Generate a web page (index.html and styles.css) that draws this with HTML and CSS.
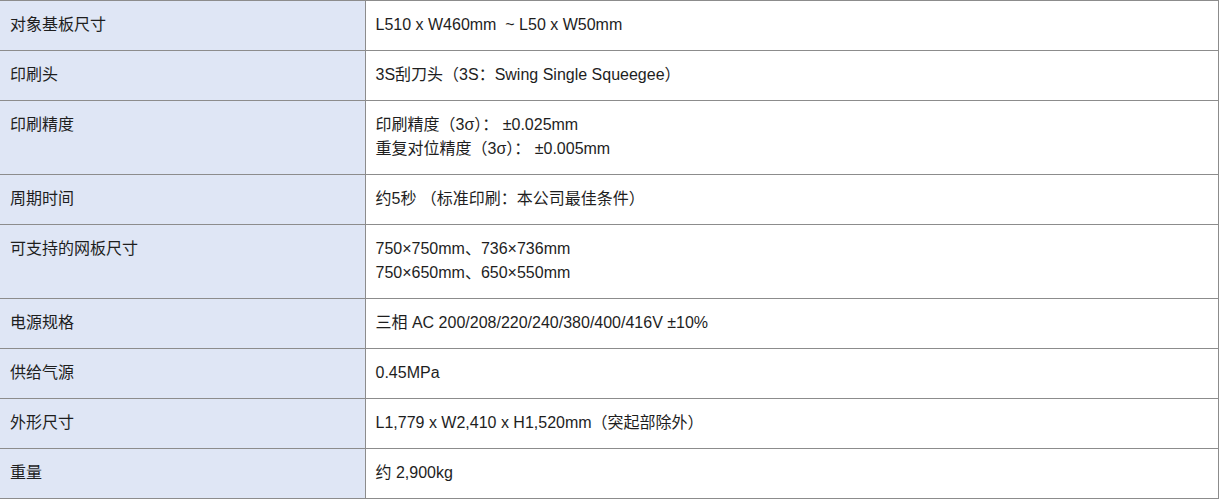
FILE: index.html
```html
<!DOCTYPE html>
<html lang="zh-CN">
<head>
<meta charset="utf-8">
<title>规格</title>
<link rel="stylesheet" href="styles.css">
</head>
<body>
<table class="spec">
  <colgroup><col class="c-label"><col class="c-value"></colgroup>
  <tbody>
    <tr><th>对象基板尺寸</th><td>L510 x W460mm &nbsp;~ L50 x W50mm</td></tr>
    <tr><th>印刷头</th><td>3S刮刀头（3S：Swing Single Squeegee）</td></tr>
    <tr><th>印刷精度</th><td>印刷精度（3σ）： ±0.025mm<br>重复对位精度（3σ）： ±0.005mm</td></tr>
    <tr><th>周期时间</th><td>约5秒 （标准印刷：本公司最佳条件）</td></tr>
    <tr><th>可支持的网板尺寸</th><td>750×750mm、736×736mm<br>750×650mm、650×550mm</td></tr>
    <tr><th>电源规格</th><td>三相 AC 200/208/220/240/380/400/416V ±10%</td></tr>
    <tr><th>供给气源</th><td>0.45MPa</td></tr>
    <tr><th>外形尺寸</th><td>L1,779 x W2,410 x H1,520mm（突起部除外）</td></tr>
    <tr><th>重量</th><td>约 2,900kg</td></tr>
  </tbody>
</table>
</body>
</html>
```
FILE: styles.css
```css
html, body {
  margin: 0;
  padding: 0;
  background: #ffffff;
}
body {
  font-family: "Liberation Sans", Arial, "Noto Sans CJK SC", sans-serif;
  font-size: 16px;
  line-height: 24px;
  color: #1e1e1e;
}
.spec {
  border-collapse: collapse;
  width: 1219px;
  table-layout: fixed;
}
.c-label { width: 365px; }
.spec th,
.spec td {
  border: 1px solid #8c8c8c;
  padding: 12px 10px 13px 10px;
  text-align: left;
  vertical-align: top;
  font-weight: normal;
}
.spec th {
  background: #dfe6f5;
  border-left: 0;
}
.spec td {
  background: #ffffff;
}
```
